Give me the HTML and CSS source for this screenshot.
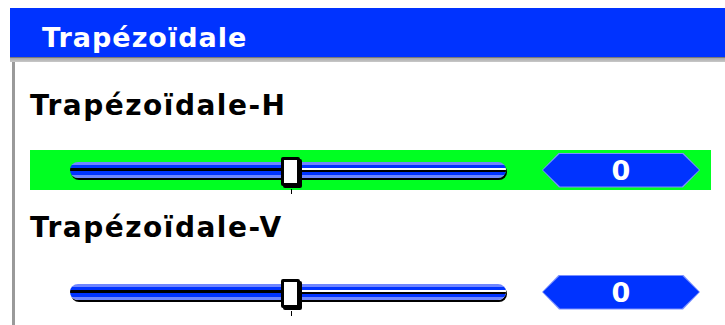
FILE: index.html
```html
<!DOCTYPE html>
<html lang="fr">
<head>
  <meta charset="UTF-8">
  <title>Trapézoïdale</title>
  <link rel="stylesheet" href="styles.css">
</head>
<body>

  <div class="panel">
    <div class="header">Trapézoïdale</div>
    <div class="rule"></div>

    <div class="content">
      <div class="label">Trapézoïdale-H</div>
      <div class="row selected">
        <div class="slider">
          <div class="track left"></div>
          <div class="thumb"></div>
          <div class="track right"></div>
        </div>
        <div class="value">0</div>
      </div>

      <div class="label">Trapézoïdale-V</div>
      <div class="row">
        <div class="slider">
          <div class="track left"></div>
          <div class="thumb"></div>
          <div class="track right"></div>
        </div>
        <div class="value">0</div>
      </div>
    </div>
  </div>

</body>
</html>
```

FILE: styles.css
```css
body {
  margin: 0;
  background: #fff;
  font-family: "DejaVu Sans", "Liberation Sans", sans-serif;
  font-weight: bold;
  overflow: hidden;
}

.panel {
  margin: 8px 0 0 10px;
}

.header {
  height: 49px;
  box-sizing: border-box;
  padding: 16px 0 0 32px;
  background: #0033ff;
  color: #fff;
  font-size: 27px;
  line-height: 28px;
  letter-spacing: 1px;
}

.rule {
  height: 5px;
  background: linear-gradient(#7a7a7a 0, #7a7a7a 1px, #a8a8a8 1px, #c8c8c8 5px);
}

.content {
  margin-left: 2px;
  border-left: 3px solid #9a9a9a;
  padding: 29px 0 20px 15px;
  width: 681px;
}

.label {
  font-size: 28px;
  line-height: 30px;
  color: #000;
  letter-spacing: 1.5px;
  margin-bottom: 29px;
}

.row {
  height: 40px;
  display: flex;
  align-items: center;
  padding-left: 40px;
  margin-bottom: 23px;
}

.row.selected {
  background: #00ff22;
}

.slider {
  display: flex;
  align-items: center;
  width: 436px;
}

.track {
  height: 16px;
  box-shadow: 1px 2px 0 #000;
}

.track.left {
  width: 211px;
  border-radius: 8px 0 0 8px;
  background: linear-gradient(#6f86ff 0, #6f86ff 3px, #0033ff 3px, #0033ff 6px,
    #000 6px, #000 9px, #0033ff 9px, #0033ff 13px, #6f86ff 13px);
}

.track.right {
  flex: 1;
  border-radius: 0 8px 8px 0;
  background: linear-gradient(#6f86ff 0, #6f86ff 3px, #0033ff 3px, #0033ff 6px,
    #fff 6px, #fff 8px, #000 8px, #000 10px, #0033ff 10px, #0033ff 13px, #6f86ff 13px);
}

.thumb {
  width: 19px;
  height: 29px;
  box-sizing: border-box;
  border: 3px solid #000;
  border-radius: 2px;
  background: #fff;
  box-shadow: 2px 2px 0 #000;
  position: relative;
  top: 1px;
}

.thumb::after {
  content: "";
  position: absolute;
  left: 7px;
  top: 29px;
  width: 1px;
  height: 5px;
  background: #000;
}

.value {
  margin-left: 36px;
  width: 158px;
  height: 35px;
  background: #7a90ff;
  clip-path: polygon(17px 0, 141px 0, 158px 50%, 141px 100%, 17px 100%, 0 50%);
  display: flex;
  align-items: center;
  justify-content: center;
  position: relative;
  z-index: 0;
  color: #fff;
  font-size: 27px;
  line-height: 1;
}

.value::before {
  content: "";
  position: absolute;
  inset: 1px;
  z-index: -1;
  background: #0033ff;
  clip-path: polygon(17px 0, 139px 0, 156px 50%, 139px 100%, 17px 100%, 0 50%);
}
```
